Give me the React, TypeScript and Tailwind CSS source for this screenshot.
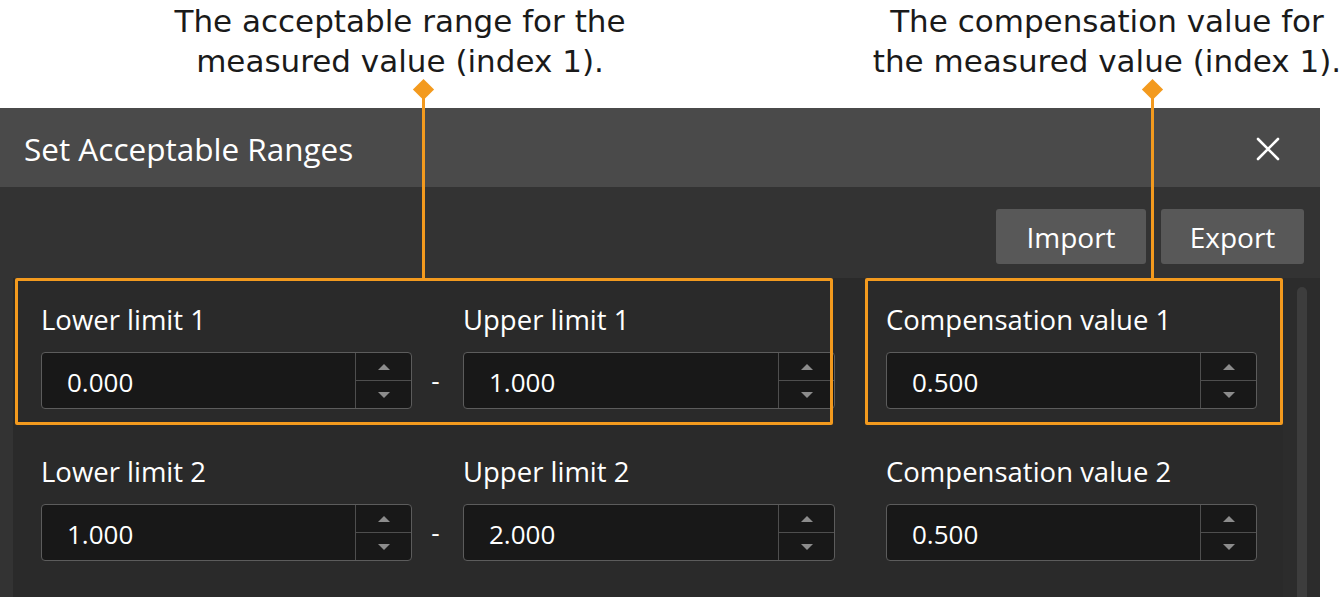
import React from "react";

const ui = { fontFamily: '"Open Sans", "Noto Sans", sans-serif' };
const note = { fontFamily: '"DejaVu Sans", "Noto Sans", sans-serif' };

function Spin({ value }: { value: string }) {
  return (
    <div className="flex h-[57px] rounded-[4px] border border-[#5c5c5c] bg-[#181818]">
      <div className="flex flex-1 items-center pl-[25px] pt-[3px] text-[26px] text-white" style={ui}>
        {value}
      </div>
      <div className="flex w-[56px] flex-col border-l border-[#4e4e4e]">
        <div className="flex flex-1 items-center justify-center border-b border-[#4e4e4e]">
          <svg width="14" height="8" viewBox="0 0 14 8">
            <path d="M1 7 L7 1 L13 7 Z" fill="#8c8c8c" />
          </svg>
        </div>
        <div className="flex flex-1 items-center justify-center">
          <svg width="14" height="8" viewBox="0 0 14 8">
            <path d="M1 1 L7 7 L13 1 Z" fill="#8c8c8c" />
          </svg>
        </div>
      </div>
    </div>
  );
}

function Row({ n, lo, hi, comp }: { n: number; lo: string; hi: string; comp: string }) {
  const label = "mb-[13px] text-[27.5px] leading-[38px] text-white";
  return (
    <div className="grid grid-cols-[371px_51px_372px_51px_371px] items-end pl-[28px] pt-[23px] pb-[21px]">
      <div>
        <div className={label} style={ui}>Lower limit {n}</div>
        <Spin value={lo} />
      </div>
      <div className="flex h-[57px] items-center justify-center pr-[4px] text-[26px] text-white" style={ui}>-</div>
      <div>
        <div className={label} style={ui}>Upper limit {n}</div>
        <Spin value={hi} />
      </div>
      <div />
      <div>
        <div className={label} style={ui}>Compensation value {n}</div>
        <Spin value={comp} />
      </div>
    </div>
  );
}

function Pointer({ left, height }: { left: number; height: number }) {
  return (
    <div className="absolute top-[82px] flex flex-col items-center" style={{ left: left - 10, height }}>
      <div className="h-[15px] w-[15px] shrink-0 rotate-45 bg-[#f39a1e]" />
      <div className="-mt-[6px] w-[3px] flex-1 bg-[#f39a1e]" />
    </div>
  );
}

export default function App() {
  return (
    <div className="relative flex h-[597px] w-[1342px] flex-col overflow-hidden bg-white">
      {/* annotations */}
      <div className="relative h-[108px] shrink-0">
        <div className="absolute left-[150px] top-[1px] w-[500px] text-center text-[31px] leading-[40px] text-[#1a1a1a]" style={note}>
          The acceptable range for the
          <br />
          measured value (index 1).
        </div>
        <div className="absolute left-[872px] top-[1px] w-[470px] text-center text-[31px] leading-[40px] text-[#1a1a1a]" style={note}>
          The compensation value for
          <br />
          the measured value (index 1).
        </div>
      </div>

      {/* dialog */}
      <div className="flex w-[1320px] flex-1 flex-col bg-[#333333]">
        <div className="flex h-[79px] shrink-0 items-center justify-between bg-[#4a4a4a] pl-[24px] pr-[40px] pt-[3px]">
          <span className="text-[31.5px] text-white" style={ui}>Set Acceptable Ranges</span>
          <svg width="24" height="24" viewBox="0 0 24 24">
            <path d="M2 2 L22 22 M22 2 L2 22" stroke="#ffffff" strokeWidth="2.6" strokeLinecap="round" />
          </svg>
        </div>
        <div className="flex shrink-0 justify-end gap-[15px] pr-[16px] pt-[22px] pb-[14px]">
          <button className="h-[55px] w-[150px] rounded-[3px] bg-[#585858] text-[28px] text-white" style={ui}>Import</button>
          <button className="h-[55px] w-[143px] rounded-[3px] bg-[#585858] text-[28px] text-white" style={ui}>Export</button>
        </div>
        <div className="flex flex-1 pl-[13px]">
          <div className="w-[1270px] bg-[#2a2a2a]">
            <Row n={1} lo="0.000" hi="1.000" comp="0.500" />
            <Row n={2} lo="1.000" hi="2.000" comp="0.500" />
          </div>
          <div className="flex w-[37px] justify-center bg-[#2c2c2c] pt-[9px]">
            <div className="w-[10px] rounded-t-[5px] bg-[#3d3d3d]" />
          </div>
        </div>
      </div>

      {/* highlight frames */}
      <div className="absolute left-[15px] top-[278px] h-[147px] w-[818px] rounded-[2px] border-[3px] border-[#f39a1e]" />
      <div className="absolute left-[865px] top-[278px] h-[147px] w-[418px] rounded-[2px] border-[3px] border-[#f39a1e]" />
      <Pointer left={426} height={198} />
      <Pointer left={1155} height={198} />
    </div>
  );
}
